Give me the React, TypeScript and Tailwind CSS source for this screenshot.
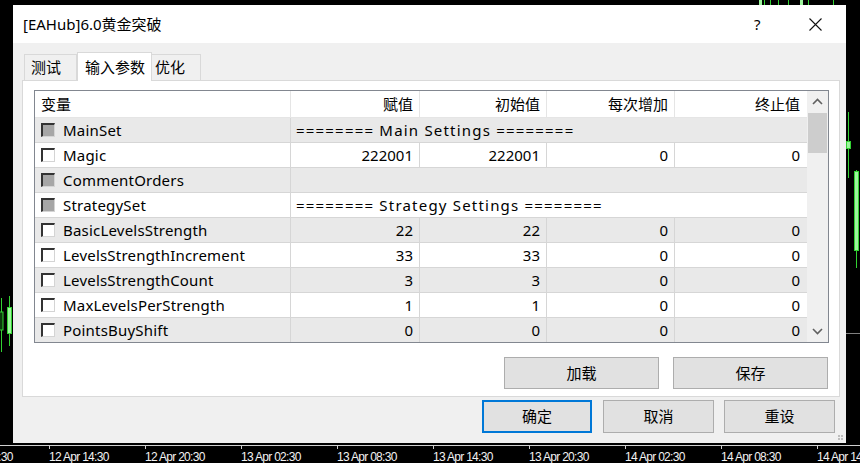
import React from 'react';

type Param = {
  name: string;
  section?: boolean;
  note?: string;
  values?: string[];
};

const params: Param[] = [
  { name: 'MainSet', section: true, note: '======== Main Settings ========' },
  { name: 'Magic', values: ['222001', '222001', '0', '0'] },
  { name: 'CommentOrders', section: true, note: '' },
  { name: 'StrategySet', section: true, note: '======== Strategy Settings ========' },
  { name: 'BasicLevelsStrength', values: ['22', '22', '0', '0'] },
  { name: 'LevelsStrengthIncrement', values: ['33', '33', '0', '0'] },
  { name: 'LevelsStrengthCount', values: ['3', '3', '0', '0'] },
  { name: 'MaxLevelsPerStrength', values: ['1', '1', '0', '0'] },
  { name: 'PointsBuyShift', values: ['0', '0', '0', '0'] },
];

const columns = [
  { title: '赋值', w: 'w-[129px]' },
  { title: '初始值', w: 'w-[127px]' },
  { title: '每次增加', w: 'w-[128px]' },
  { title: '终止值', w: 'w-[131px]' },
];

const axisLabels = [
  '12 Apr 08:30',
  '12 Apr 14:30',
  '12 Apr 20:30',
  '13 Apr 02:30',
  '13 Apr 08:30',
  '13 Apr 14:30',
  '13 Apr 20:30',
  '14 Apr 02:30',
  '14 Apr 08:30',
  '14 Apr 14:30',
];

const CheckBox: React.FC<{ dim?: boolean }> = ({ dim }) => (
  <span
    className={`block w-[14px] h-[14px] border-t-2 border-l-2 border-t-[#333333] border-l-[#333333] border-r border-b border-r-[#d4d4d4] border-b-[#d4d4d4] ${
      dim ? 'bg-[#a6a6a6]' : 'bg-white'
    }`}
  />
);

const Chevron: React.FC<{ up?: boolean }> = ({ up }) => (
  <svg width="11" height="7" viewBox="0 0 11 7">
    <polyline
      points={up ? '1,6 5.5,1.5 10,6' : '1,1 5.5,5.5 10,1'}
      fill="none"
      stroke="#606060"
      strokeWidth="1.6"
    />
  </svg>
);

// candles peeking out around the dialog
const ChartBackdrop: React.FC = () => (
  <svg className="absolute inset-0" width="860" height="463" viewBox="0 0 860 463">
    <g stroke="#32d232" strokeWidth="1">
      <line x1="1.5" y1="298" x2="1.5" y2="352" />
      <line x1="9.5" y1="296" x2="9.5" y2="346" />
      <line x1="848.5" y1="112" x2="848.5" y2="178" />
      <line x1="856.5" y1="170" x2="856.5" y2="268" />
      <line x1="764.5" y1="0" x2="764.5" y2="5" />
      <line x1="770.5" y1="0" x2="770.5" y2="5" />
      <line x1="778.5" y1="0" x2="778.5" y2="5" />
      <line x1="788.5" y1="0" x2="788.5" y2="5" />
      <line x1="808.5" y1="0" x2="808.5" y2="5" />
      <line x1="833.5" y1="0" x2="833.5" y2="5" />
    </g>
    <rect x="-1" y="312" width="4" height="18" fill="#0c3a0c" stroke="#32d232" />
    <rect x="7.5" y="307.5" width="4" height="26" fill="#9df59d" stroke="#32d232" />
    <rect x="846.5" y="141.5" width="4" height="7" fill="#9df59d" stroke="#32d232" />
    <rect x="854.5" y="171.5" width="4" height="79" fill="#9df59d" stroke="#32d232" />
    <rect x="759" y="0" width="3" height="5" fill="#9df59d" />
    <rect x="800" y="0" width="3" height="5" fill="#9df59d" />
    <line x1="846" y1="333.5" x2="860" y2="333.5" stroke="#808080" />
  </svg>
);

const ParamRow: React.FC<{ p: Param; shaded: boolean }> = ({ p, shaded }) => (
  <div
    className={`flex h-[25px] shrink-0 border-b border-[#d6d6d6] ${shaded ? 'bg-[#e9e9e9]' : 'bg-white'}`}
  >
    <div className="w-[256px] flex items-center pl-[6px] gap-[8px] border-r border-[#d6d6d6]">
      <CheckBox dim={p.section} />
      <span className="tracking-[0.2px]">{p.name}</span>
    </div>
    {p.section ? (
      <div className="flex-1 flex items-center pl-[5px] whitespace-pre tracking-[1.2px]">{p.note}</div>
    ) : (
      columns.map((c, i) => (
        <div
          key={c.title}
          className={`${c.w} flex items-center justify-end pr-[6px] ${
            i < columns.length - 1 ? 'border-r border-[#d6d6d6]' : ''
          }`}
        >
          {p.values?.[i]}
        </div>
      ))
    )}
  </div>
);

const WinButton: React.FC<{ label: string; className?: string; focused?: boolean }> = ({
  label,
  className,
  focused,
}) => (
  <button
    className={`flex items-center justify-center bg-[#e1e1e1] ${
      focused ? 'border-2 border-[#0078d7]' : 'border border-[#adadad]'
    } ${className ?? ''}`}
  >
    {label}
  </button>
);

export default function App() {
  return (
    <div className="relative w-[860px] h-[463px] bg-black overflow-hidden font-['Noto_Sans','Noto_Sans_CJK_SC',sans-serif] text-[15px] text-black">
      <ChartBackdrop />

      <div className="relative flex flex-col h-full">
        {/* dialog window */}
        <div className="relative ml-[13px] mt-[5px] w-[833px] h-[439px] flex flex-col bg-[#f0f0f0]">
          <div className="h-[38px] shrink-0 bg-white flex items-center pl-[10px]">
            <span className="flex-1 leading-none">[EAHub]6.0黄金突破</span>
            <span className="w-[10px] text-[15px] leading-none mr-[45px]">?</span>
            <svg className="mr-[24px]" width="13" height="13" viewBox="0 0 13 13">
              <path d="M0.5 0.5 L12.5 12.5 M12.5 0.5 L0.5 12.5" stroke="#111" strokeWidth="1.1" />
            </svg>
          </div>

          <div className="flex-1 flex flex-col pt-[9px] pl-[9px] pr-[6px]">
            {/* tabs */}
            <div className="flex items-end h-[28px] pl-[2px]">
              <div className="w-[53px] h-[26px] flex items-center pl-[6px] border border-b-0 border-[#d9d9d9] bg-[#f0f0f0]">
                测试
              </div>
              <div className="relative z-10 w-[75px] h-[29px] -mb-px flex items-center pl-[7px] border border-b-0 border-[#d9d9d9] bg-white">
                输入参数
              </div>
              <div className="w-[49px] h-[26px] flex items-center pl-[3px] border border-b-0 border-l-0 border-[#d9d9d9] bg-[#f0f0f0]">
                优化
              </div>
            </div>

            {/* tab panel */}
            <div className="w-[818px] h-[317px] bg-white border border-[#d9d9d9] pt-[9px] pl-[11px] pr-[10px] flex flex-col">
              <div className="h-[253px] w-[795px] border border-[#828790] flex overflow-hidden">
                <div className="flex-1 flex flex-col">
                  <div className="h-[27px] shrink-0 flex bg-white border-b border-[#e5e5e5]">
                    <div className="w-[256px] flex items-center pl-[6px] border-r border-[#e5e5e5]">
                      变量
                    </div>
                    {columns.map((c, i) => (
                      <div
                        key={c.title}
                        className={`${c.w} flex items-center justify-end pr-[6px] ${
                          i < columns.length - 1 ? 'border-r border-[#e5e5e5]' : ''
                        }`}
                      >
                        {c.title}
                      </div>
                    ))}
                  </div>
                  {params.map((p, i) => (
                    <ParamRow key={p.name} p={p} shaded={i % 2 === 0} />
                  ))}
                </div>

                {/* vertical scrollbar */}
                <div className="w-[21px] shrink-0 bg-[#f0f0f0] flex flex-col items-center">
                  <div className="h-[21px] w-full flex items-center justify-center">
                    <Chevron up />
                  </div>
                  <div className="w-[19px] h-[40px] bg-[#cdcdcd] mt-[1px]" />
                  <div className="flex-1" />
                  <div className="h-[22px] w-full flex items-center justify-center">
                    <Chevron />
                  </div>
                </div>
              </div>

              <div className="flex justify-end gap-[14px] mt-[14px] pr-[1px]">
                <WinButton label="加载" className="w-[155px] h-[32px]" />
                <WinButton label="保存" className="w-[155px] h-[32px]" />
              </div>
            </div>

            <div className="flex justify-end mt-[3px] pr-[5px]">
              <WinButton label="确定" className="w-[110px] h-[33px] mr-[11px]" focused />
              <WinButton label="取消" className="w-[111px] h-[33px] mr-[10px]" />
              <WinButton label="重设" className="w-[111px] h-[33px]" />
            </div>
          </div>

          {/* size grip */}
          <div className="absolute right-[3px] bottom-[3px] grid grid-cols-2 gap-[1px]">
            <span className="w-[2px] h-[2px] bg-[#bdbdbd]" />
            <span className="w-[2px] h-[2px] bg-[#bdbdbd]" />
            <span className="w-[2px] h-[2px] bg-[#bdbdbd]" />
            <span className="w-[2px] h-[2px] bg-[#bdbdbd]" />
          </div>
        </div>

        {/* time axis */}
        <div className="mt-[2px] border-t border-[#d0d0d0] flex ml-[-47px] font-['Liberation_Sans',sans-serif] text-[12px] tracking-[-0.7px] text-[#f2f2f2]">
          {axisLabels.map((l) => (
            <div key={l} className="w-[96px] shrink-0 flex flex-col">
              <span className="w-px h-[3px] bg-[#d0d0d0]" />
              <span className="leading-none whitespace-nowrap mt-[2px]">{l}</span>
            </div>
          ))}
        </div>
      </div>
    </div>
  );
}
